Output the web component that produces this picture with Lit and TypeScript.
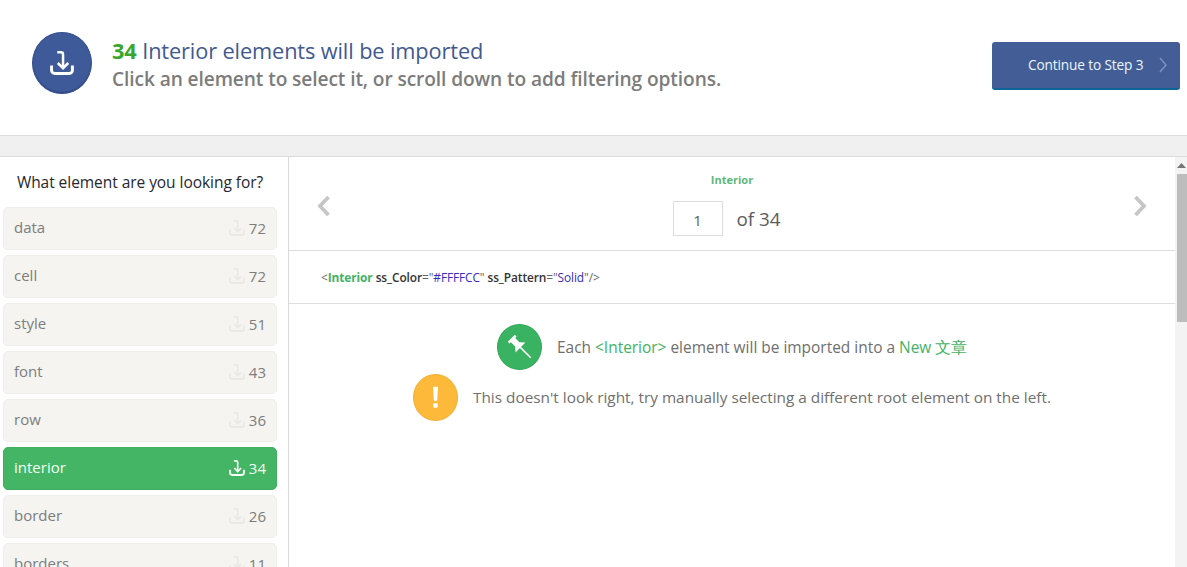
import { LitElement, html, css, svg } from "lit";
import { customElement } from "lit/decorators.js";

const importIcon = svg`<path d="M7 1.300H10.500a2 2 0 0 1 2 2V16" fill="none" stroke="currentColor" stroke-width="2.400"/><path d="M7.500 11.500l5 5 5-5" fill="none" stroke="currentColor" stroke-width="2.400"/><path d="M1.500 14v4.500a3 3 0 0 0 3 3h14a3 3 0 0 0 3-3V14" fill="none" stroke="currentColor" stroke-width="2.800"/>`;

const items: [string, number][] = [
  ["data", 72], ["cell", 72], ["style", 51], ["font", 43], ["row", 36],
  ["interior", 34], ["border", 26], ["borders", 11],
];

@customElement("app-root")
export class AppRoot extends LitElement {
  static styles = css`
    :host { display: block; width: 1187px; height: 567px; overflow: hidden; background: #fff; font-family: "Open Sans", "Noto Sans", "Liberation Sans", sans-serif; color: #6f6f6f; }
    * { box-sizing: border-box; }
    .top { height: 136px; border-bottom: 1px solid #dcdcdc; display: flex; align-items: flex-start; padding: 32px 7px 0 32px; }
    .badge { width: 60px; height: 62px; border-radius: 50%; background: #3f5a99; border: 1px solid #36508c; color: #fff; display: flex; align-items: center; justify-content: center; flex: none; box-shadow: inset 0 -1px 1px #2f4880; }
    .badge svg { width: 24px; height: 24px; }
    .titles { margin-left: 20px; flex: 1; padding-top: 5px; }
    .t1 { font-size: 21.75px; line-height: 27px; color: #3f5a90; letter-spacing: -0.12px; white-space: nowrap; }
    .t1 b { color: #3aa62c; font-weight: 700; }
    .t2 { font-size: 19.15px; line-height: 28px; margin-top: 1px; font-weight: 600; color: #7c7c7c; letter-spacing: -0.1px; white-space: nowrap; }
    .cont { width: 188px; height: 48px; margin-top: 10px; background: #435e96; border-bottom: 2px solid #0f6496; border-radius: 3px; color: #eaf6ff; font-size: 13.7px; line-height: 18px; display: flex; align-items: center; padding: 0 0 0 36px; white-space: nowrap; letter-spacing: -0.15px; }
    .cont svg { margin-left: 15px; width: 10px; height: 16px; }
    .band { height: 21px; background: #f0f0f0; border-bottom: 1px solid #dcdcdc; }
    .body { display: flex; height: 410px; }
    .side { width: 289px; flex: none; border-right: 1px solid #d9d9d9; padding-left: 3px; overflow: hidden; }
    .side h2 { margin: 0; width: 274px; height: 50px; padding-top: 15px; text-align: center; font-size: 15.5px; line-height: 20px; font-weight: 400; color: #25282e; white-space: nowrap; letter-spacing: -0.05px; }
    .item { width: 274px; height: 43px; flex: none; margin-bottom: 5px; background: #f5f4f1; border: 1px solid #efeeeb; border-radius: 5px; display: flex; align-items: center; padding: 0 10px 3px; font-size: 15px; color: #7d7d7d; }
    .item .name { flex: 1; }
    .item .num { position: relative; top: 1px; }
    .item svg { width: 16px; height: 16px; color: #e9e8e4; margin-right: 4px; position: relative; top: 1px; }
    .item.on { background: #43b565; border-color: #3fae60; color: #f4fff6; }
    .item.on svg { color: #f4fff6; }
    .main { flex: 1; min-width: 0; }
    .pager { height: 94px; border-bottom: 1px solid #dedede; display: flex; align-items: center; padding: 4px 28px 0; }
    .arrow { width: 14px; height: 22px; flex: none; color: #c6c6c6; }
    .mid { flex: 1; display: flex; flex-direction: column; align-items: center; }
    .label { font-size: 11px; line-height: 15px; font-weight: 700; color: #5fb878; margin-top: -3px; }
    .pg { display: flex; align-items: center; margin-top: 14px; font-size: 18.8px; color: #5c5c5c; margin-left: -11px; }
    .box { width: 50px; height: 35px; border: 1px solid #dcdcdc; font-size: 15px; display: flex; align-items: center; justify-content: center; padding-top: 3px; margin-right: 14px; color: #606060; }
    .xml { height: 53px; border-bottom: 1px solid #dedede; display: flex; align-items: center; padding: 0 0 0 32px; font-size: 11.9px; color: #666; white-space: pre; letter-spacing: -0.1px; }
    .xml .g { color: #45b165; font-weight: 700; }
    .xml .k { color: #333; font-weight: 600; }
    .xml .v { color: #3a2bb8; }
    .msg { display: flex; align-items: center; color: #6f6f6f; white-space: pre; }
    .msg1 { padding-left: 208px; margin-top: 20px; font-size: 15.45px; }
    .msg2 { padding-left: 124px; margin-top: 4px; font-size: 15.35px; }
    .txt { padding-top: 1px; }
    .txt2 { padding-bottom: 2px; }
    .g2 { color: #45b165; }
    .cjk { font-size: 16px; }
    .ic { border-radius: 50%; flex: none; display: flex; align-items: center; justify-content: center; color: #fff; }
    .pin { width: 45px; height: 46px; background: #39b361; border: 1px solid #34a85a; margin-right: 15px; }
    .warn { width: 45px; height: 47px; background: #fdb93a; border: 1px solid #f4b036; margin-right: 15px; }
    .pin svg { width: 24px; height: 24px; }
    .warn svg { width: 7px; height: 23px; }
    .scroll { width: 12px; flex: none; background: #f3f3f3; display: flex; flex-direction: column; align-items: center; }
    .scroll svg { width: 9px; height: 5px; margin-top: 6px; margin-bottom: 6px; }
    .thumb { width: 10px; height: 148px; background: #bdbdbd; margin-left: 1px; }
  `;

  render() {
    return html`
      <div class="top">
        <div class="badge"><svg viewBox="0 0 23 23">${importIcon}</svg></div>
        <div class="titles">
          <div class="t1"><b>34</b> Interior elements will be imported</div>
          <div class="t2">Click an element to select it, or scroll down to add filtering options.</div>
        </div>
        <div class="cont">Continue to Step 3
          <svg viewBox="0 0 10 16"><path d="M2 1l6 7-6 7" fill="none" stroke="#7b92c0" stroke-width="1.500"/></svg>
        </div>
      </div>
      <div class="band"></div>
      <div class="body">
        <div class="side">
          <h2>What element are you looking for?</h2>
          ${items.map(([n, c]) => html`
            <div class="item ${n === "interior" ? "on" : ""}">
              <span class="name">${n}</span>
              <svg viewBox="0 0 23 23">${importIcon}</svg>
              <span class="num">${c}</span>
            </div>`)}
        </div>
        <div class="main">
          <div class="pager">
            <svg class="arrow" viewBox="0 0 14 22"><path d="M11.500 2L3 11l8.500 9" fill="none" stroke="currentColor" stroke-width="3.800"/></svg>
            <div class="mid">
              <div class="label">Interior</div>
              <div class="pg"><div class="box">1</div>of 34</div>
            </div>
            <svg class="arrow" viewBox="0 0 14 22"><path d="M2.500 2L11 11l-8.500 9" fill="none" stroke="currentColor" stroke-width="3.800"/></svg>
          </div>
          <div class="xml"><span>&lt;<span class="g">Interior</span> <span class="k">ss_Color</span>="<span class="v">#FFFFCC</span>" <span class="k">ss_Pattern</span>="<span class="v">Solid</span>"/&gt;</span></div>
          <div class="msg msg1">
            <div class="ic pin"><svg viewBox="0 0 24 24"><g transform="translate(10 10) rotate(-45)"><path d="M-5-9.500h10v2.500h-2v6l4 4.500h-14l4-4.500v-6h-2z" fill="currentColor"/><path d="M0 3v15" stroke="currentColor" stroke-width="1.500" fill="none"/></g></svg></div>
            <span class="txt">Each <span class="g2">&lt;Interior&gt;</span> element will be imported into a <span class="g2">New <span class="cjk">文章</span></span></span>
          </div>
          <div class="msg msg2">
            <div class="ic warn"><svg viewBox="0 0 8 28"><path d="M1 1h6l-1 17H2z" fill="currentColor"/><rect x="1.300" y="21" width="5.400" height="5.400" rx="1" fill="currentColor"/></svg></div>
            <span class="txt2">This doesn't look right, try manually selecting a different root element on the left.</span>
          </div>
        </div>
        <div class="scroll">
          <svg viewBox="0 0 9 5"><path d="M4.500 0L9 5H0z" fill="#777"/></svg>
          <div class="thumb"></div>
        </div>
      </div>
    `;
  }
}
